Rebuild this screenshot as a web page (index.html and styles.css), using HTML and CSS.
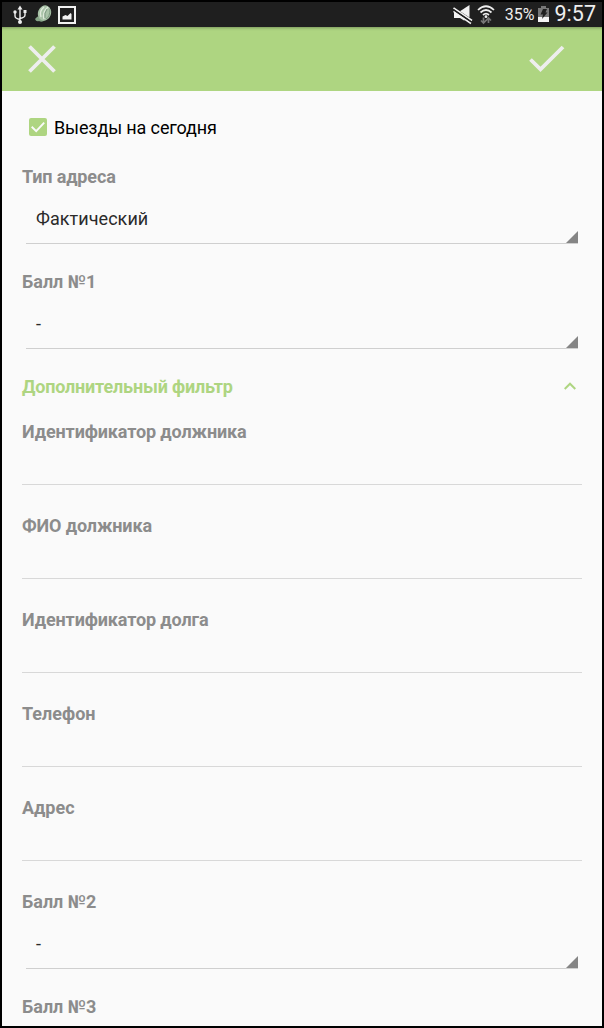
FILE: index.html
```html
<!DOCTYPE html>
<html lang="ru">
<head>
<meta charset="utf-8">
<title>Фильтр</title>
<link rel="stylesheet" href="styles.css">
</head>
<body>
<div class="screen">
  <div class="status">
    <div class="status-left">
      <svg width="14" height="20" viewBox="0 0 14 20" fill="none" stroke="#eee" stroke-width="1.400"><path d="M7 3V17M2 7v4q0 2.500 5 3.500M12 6v4q0 2.500-5 3.500"/><path d="M7 0.500l2.500 4h-5z" fill="#eee" stroke="none"/><circle cx="7" cy="17" r="2" fill="#eee" stroke="none"/><circle cx="2" cy="7" r="1.700" fill="#eee" stroke="none"/><path d="M10.500 5h3v3h-3z" fill="#eee" stroke="none"/></svg>
      <svg class="ball" width="18" height="18" viewBox="0 0 18 18"><path d="M1 14q2-3 5-3l5 4q-3 3-6 1-3 1-4-2z" fill="#86a487"/><ellipse cx="10.500" cy="8" rx="6.500" ry="7.800" transform="rotate(20 10.500 8)" fill="#a9c3a8"/><path d="M10 2q-5 4-3 10M14 2q-6 5-4 12" fill="none" stroke="#dfeadb" stroke-width="1.400"/><path d="M13 4q-3 4-2 9M16 4q0 8-4 10" fill="none" stroke="#728e76" stroke-width=".8"/></svg>
      <svg width="18" height="18" viewBox="0 0 18 18"><path d="M1 1h16v16H1z" fill="none" stroke="#f2f2f2" stroke-width="2"/><path d="M4.500 13.500v-3l3-1.500 2 1 3-3 1 1v5.500z" fill="#f2f2f2"/></svg>
    </div>
    <div class="status-right">
      <svg class="mute" width="20" height="20" viewBox="0 0 20 20"><path d="M7 6.200L16.500 0v12.500z" fill="#f2f2f2"/><path d="M1 6.500l8.500 6.500H1zM1 13h8.500L12 15l-1 .5L7 13z" fill="#f2f2f2"/><path d="M.5 3L19 15.500M.5 6.300L18 18.500" stroke="#f2f2f2" stroke-width="1.600"/><path d="M.5 4.700L18.500 17" stroke="#1f1f1f" stroke-width="1.400"/></svg>
      <svg class="wifi" width="18" height="20" viewBox="0 0 18 20" fill="none" stroke="#eee" stroke-width="1.700"><path d="M1 5q8-7.500 16 0M3.500 7.500q5.500-5 11 0M6 10q3-2.600 6 0"/><circle cx="9" cy="11.700" r="1.400" fill="#eee" stroke="none"/><path d="M6.500 12.500v5M4 15.500l2.500 2.500L9 15.500M11.500 18v-5M9 15.500l2.500-2.500 2.500 2.500" stroke="#777"/></svg>
      <span class="percent">35%</span>
      <svg class="battery" width="11" height="16" viewBox="0 0 11 16"><path d="M3 0h5v2h3v9H0V2h3z" fill="#777"/><path d="M0 11h11v5H0z" fill="#f4f4f4"/><path d="M5 3h4L7.500 6.500h2L4 13l1-4.500H2.500z" fill="#1f1f1f"/></svg>
      <span class="clock">9:57</span>
    </div>
  </div>
  <header class="toolbar">
    <svg width="28" height="28" viewBox="0 0 28 28" fill="none" stroke="#eee" stroke-width="3.800"><path d="M1.500 1.500l25 25M26.500 1.500l-25 25"/></svg>
    <svg class="accept" width="36" height="28" viewBox="0 0 36 28" fill="none" stroke="#eee" stroke-width="3.800"><path d="M1.500 14.500l10 9.800L34 2"/></svg>
  </header>
  <main class="form">
    <label class="check-row">
      <svg width="18" height="18" viewBox="0 0 18 18"><rect width="18" height="18" rx="2" fill="#aed581"/><path d="M2.700 8.800l4.500 4.400 8-8.600" fill="none" stroke="#fafafa" stroke-width="1.900"/></svg>
      <span class="check-text">Выезды на сегодня</span>
    </label>
    <div class="label tight">Тип адреса</div>
    <div class="select">Фактический</div>
    <div class="label">Балл №1</div>
    <div class="select">-</div>
    <div class="label section"><span>Дополнительный фильтр</span>
      <svg width="12" height="8" viewBox="0 0 12 8" fill="none" stroke="#aed581" stroke-width="2"><path d="M.7 7L6 1.700 11.300 7"/></svg>
    </div>
    <div class="label tight">Идентификатор должника</div>
    <div class="input"></div>
    <div class="label tight">ФИО должника</div>
    <div class="input"></div>
    <div class="label tight">Идентификатор долга</div>
    <div class="input"></div>
    <div class="label">Телефон</div>
    <div class="input"></div>
    <div class="label">Адрес</div>
    <div class="input"></div>
    <div class="label">Балл №2</div>
    <div class="select">-</div>
    <div class="label">Балл №3</div>
  </main>
</div>
</body>
</html>
```
FILE: styles.css
```css
* { box-sizing: border-box; }
body { margin: 0; font-family: Roboto, "Noto Sans", sans-serif; }
svg { display: block; flex: none; }
.screen {
  width: 604px;
  height: 1028px;
  border: 2px solid #000;
  background: #fafafa;
  overflow: hidden;
}
.status {
  height: 25px;
  padding: 0 6px 0 11px;
  display: flex;
  justify-content: space-between;
  background: #1f1f1f;
  color: #eee;
}
.status-left { display: flex; align-items: center; gap: 7px; }
.ball { margin-right: -1px; margin-bottom: 1px; }
.status-right { display: flex; align-items: center; }
.mute { margin-right: 4px; }
.percent { margin-left: 10px; font-size: 16px; line-height: 24px; padding-top: 1px; }
.battery { margin: 0 0 2px 3px; }
.clock { margin-left: 6px; font-size: 21.500px; line-height: 24px; padding-bottom: 1px; }
.toolbar {
  height: 64px;
  padding: 0 37px 0 26px;
  display: flex;
  align-items: center;
  justify-content: space-between;
  background: #aed581;
  box-shadow: inset 0 3px 3px -2px rgba(0, 0, 0, .3);
}
.form { padding: 27px 20px 0; }
.check-row {
  height: 18px;
  margin: 0 0 29px 7px;
  display: flex;
  align-items: center;
  gap: 7px;
  font-size: 18px;
  letter-spacing: -.12px;
  color: #000;
}
.label {
  height: 24px;
  line-height: 24px;
  font-size: 18px;
  font-weight: 700;
  color: #8c8c8c;
}
.tight { letter-spacing: -.12px; }
.select {
  height: 55px;
  margin: 0 4px 26px;
  padding: 0 10px;
  border-bottom: 1px solid #cfcfcf;
  background: linear-gradient(135deg, transparent 49%, #858585 51%) right bottom / 13px 13px no-repeat border-box;
  line-height: 59px;
  font-size: 18px;
  letter-spacing: .05px;
  color: #2a2a2a;
}
.section {
  display: flex;
  align-items: center;
  justify-content: space-between;
  margin-bottom: 21px;
  padding-right: 6px;
  letter-spacing: -.18px;
  color: #aed581;
}
.section svg { margin-bottom: 2px; }
.input {
  height: 41px;
  margin-bottom: 29px;
  border-bottom: 1px solid #d8d8d8;
}
```
